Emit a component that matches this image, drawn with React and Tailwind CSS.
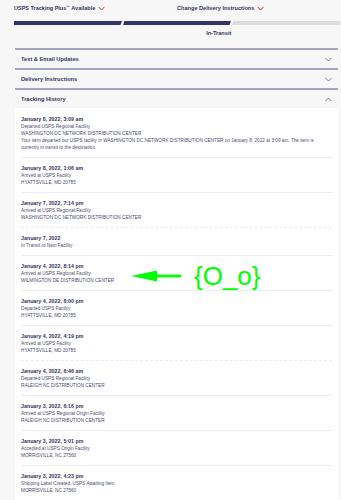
import React from 'react';

const events = [
  {
    date: 'January 8, 2022, 3:09 am',
    lines: [
      'Departed USPS Regional Facility',
      'WASHINGTON DC NETWORK DISTRIBUTION CENTER',
      'Your item departed our USPS facility in WASHINGTON DC NETWORK DISTRIBUTION CENTER on January 8, 2022 at 3:09 am. The item is currently in transit to the destination.',
    ],
  },
  { date: 'January 8, 2022, 1:06 am', lines: ['Arrived at USPS Facility', 'HYATTSVILLE, MD 20785'] },
  {
    date: 'January 7, 2022, 7:14 pm',
    lines: ['Arrived at USPS Regional Facility', 'WASHINGTON DC NETWORK DISTRIBUTION CENTER'],
    dotted: true,
  },
  { date: 'January 7, 2022', lines: ['In Transit to Next Facility'] },
  {
    date: 'January 4, 2022, 8:14 pm',
    lines: ['Arrived at USPS Regional Facility', 'WILMINGTON DE DISTRIBUTION CENTER'],
    flagged: true,
  },
  { date: 'January 4, 2022, 6:00 pm', lines: ['Departed USPS Facility', 'HYATTSVILLE, MD 20785'] },
  { date: 'January 4, 2022, 4:19 pm', lines: ['Arrived at USPS Facility', 'HYATTSVILLE, MD 20785'], dotted: true },
  { date: 'January 4, 2022, 6:46 am', lines: ['Departed USPS Regional Facility', 'RALEIGH NC DISTRIBUTION CENTER'] },
  { date: 'January 3, 2022, 6:16 pm', lines: ['Arrived at USPS Regional Origin Facility', 'RALEIGH NC DISTRIBUTION CENTER'] },
  { date: 'January 3, 2022, 5:01 pm', lines: ['Accepted at USPS Origin Facility', 'MORRISVILLE, NC 27560'] },
  { date: 'January 3, 2022, 4:23 pm', lines: ['Shipping Label Created, USPS Awaiting Item', 'MORRISVILLE, NC 27560'] },
];

function RedChevron() {
  return (
    <svg width="7" height="5" viewBox="0 0 7 5" className="ml-[3px]">
      <path d="M0.5 0.8 L3.5 4 L6.5 0.8" fill="none" stroke="#e71921" strokeWidth="0.9" />
    </svg>
  );
}

function Chevron({ up }) {
  return (
    <svg width="7" height="5" viewBox="0 0 7 5">
      <path
        d={up ? 'M0.5 4 L3.5 1 L6.5 4' : 'M0.5 1 L3.5 4 L6.5 1'}
        fill="none"
        stroke="#6b6b93"
        strokeWidth="0.9"
      />
    </svg>
  );
}

function AccordionRow({ title, up }) {
  return (
    <div className="flex items-center justify-between h-[20px] pl-[6px] pr-[6px] border-t-2 border-[#a5a5c3]">
      <span className="text-[5.7px] font-bold text-[#333366]">{title}</span>
      <Chevron up={up} />
    </div>
  );
}

export default function App() {
  return (
    <div
      className="min-h-screen bg-[#f7f7f7] text-[#333366] overflow-hidden"
      style={{ fontFamily: '"Liberation Sans", Arial, sans-serif' }}
    >
      <div className="pt-[5px] pl-[14px] pr-[1px]">
        <div className="grid grid-cols-2 h-[7px] items-center">
          <div className="flex items-center text-[5.5px] font-bold leading-[7px]">
            USPS Tracking Plus<span className="text-[3.5px] self-start leading-[4px]">™</span>&nbsp;Available
            <RedChevron />
          </div>
          <div className="flex items-center text-[5.6px] font-bold leading-[7px]">
            Change Delivery Instructions
            <RedChevron />
          </div>
        </div>

        <div className="grid grid-cols-3 gap-[1px] mt-[9px] h-[4px]">
          <div className="bg-[#333366] [clip-path:polygon(0_0,100%_0,calc(100%-1.5px)_100%,0_100%)]" />
          <div className="bg-[#333366] [clip-path:polygon(1.5px_0,100%_0,calc(100%-1.5px)_100%,0_100%)]" />
          <div className="bg-[#dcdcdc] [clip-path:polygon(1.5px_0,100%_0,100%_100%,0_100%)]" />
        </div>
        <div className="grid grid-cols-3 mt-[5px]">
          <div />
          <div className="text-right text-[5.6px] font-bold leading-[7px]">In-Transit</div>
          <div />
        </div>
      </div>

      <div className="ml-[15px] mr-[3px] mt-[11px]">
        <AccordionRow title="Text & Email Updates" />
        <AccordionRow title="Delivery Instructions" />
        <AccordionRow title="Tracking History" up />

        <div className="bg-white pt-[1px]">
          {events.map((ev, i) => (
            <div key={i} className="relative px-[6px]">
              <div
                className={
                  'pt-[7px] pb-[6px] ' +
                  (ev.dotted ? 'border-b border-dashed border-[#ececf2]' : 'border-b border-[#ebebeb]')
                }
              >
                <div className="text-[5.3px] leading-[7px] font-bold text-[#333366]">{ev.date}</div>
                {ev.lines.map((l, j) => (
                  <div key={j} className="text-[4.7px] leading-[7px] text-[#4b4b73]">
                    {l}
                  </div>
                ))}
              </div>
              {ev.flagged && (
                <div className="absolute left-[116px] top-[5px] flex items-center">
                  <svg width="50" height="12" viewBox="0 0 50 12">
                    <polygon points="0,6 26,0.5 26,11.5" fill="#00ff00" />
                    <rect x="24" y="4.6" width="26" height="2.8" fill="#00ff00" />
                  </svg>
                  <span className="ml-[13px] text-[26px] leading-[30px] text-[#00ff00]">{'{O_o}'}</span>
                </div>
              )}
            </div>
          ))}
        </div>
      </div>
    </div>
  );
}
